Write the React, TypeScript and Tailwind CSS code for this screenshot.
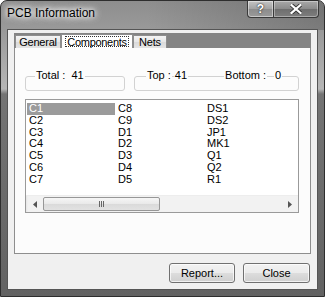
import React from "react";

const columns = [
  ["C1", "C2", "C3", "C4", "C5", "C6", "C7"],
  ["C8", "C9", "D1", "D2", "D3", "D4", "D5"],
  ["DS1", "DS2", "JP1", "MK1", "Q1", "Q2", "R1"],
];

function TitleButtons() {
  return (
    <div className="flex mt-0">
      <div className="w-[26px] h-[17px] flex items-center justify-center rounded-bl-[4px] border border-t-0 border-r-0 border-[#3a3a3a] bg-[linear-gradient(to_bottom,#c4c4c4,#a2a2a2_50%,#8c8c8c_51%,#9a9a9a)] shadow-[inset_0_0_0_1px_rgba(255,255,255,0.45)]">
        <span className="text-[12px] leading-none font-bold text-white [text-shadow:0_0_2px_#333,0_0_1px_#222]">?</span>
      </div>
      <div className="w-[46px] h-[17px] flex items-center justify-center rounded-br-[4px] border border-t-0 border-[#3a3a3a] bg-[linear-gradient(to_bottom,#a8a8a8,#8a8a8a_50%,#6e6e6e_51%,#7e7e7e)] shadow-[inset_0_0_0_1px_rgba(255,255,255,0.35)]">
        <svg width="12" height="10" viewBox="0 0 12 10">
          <path d="M1.5 1 L10.5 9 M10.5 1 L1.5 9" stroke="#333" strokeWidth="4" strokeLinecap="square" />
          <path d="M1.5 1 L10.5 9 M10.5 1 L1.5 9" stroke="#fff" strokeWidth="2.2" strokeLinecap="square" />
        </svg>
      </div>
    </div>
  );
}

function Tab({ label, active, w }: { label: string; active?: boolean; w: string }) {
  if (active) {
    return (
      <div className={`${w} h-[14px] flex items-center justify-center bg-white border border-b-0 border-[#8e8e8e] tracking-[-0.3px]`}>
        <span className="px-[1px] leading-[10px] h-[11px] border border-dotted border-[#333]">{label}</span>
      </div>
    );
  }
  return (
    <div className={`${w} h-[13px] flex items-center justify-center leading-[11px] tracking-[-0.2px] bg-[linear-gradient(to_bottom,#f4f4f4,#e6e6e6_50%,#dadada_51%,#e4e4e4)] border border-b-0 border-[#8e8e8e]`}>
      {label}
    </div>
  );
}

function ScrollBar() {
  return (
    <div className="h-[17px] flex bg-[linear-gradient(to_right,#e6e6e6,#f2f2f2_2px,#f2f2f2)] border-t border-[#ededed]">
      <div className="w-[17px] flex items-center justify-center">
        <svg width="4" height="7" viewBox="0 0 4 7">
          <path d="M4 0 L0 3.5 L4 7 Z" fill="#555" />
        </svg>
      </div>
      <div className="w-[117px] my-[1px] flex items-center justify-center rounded-[2px] border border-[#979797] bg-[linear-gradient(to_bottom,#f6f6f6,#e9e9e9_50%,#dadada_51%,#e2e2e2)]">
        <div className="flex gap-[1px]">
          <div className="w-[1px] h-[6px] bg-[#666]" />
          <div className="w-[1px] h-[6px] bg-[#666]" />
          <div className="w-[1px] h-[6px] bg-[#666]" />
        </div>
      </div>
      <div className="flex-1" />
      <div className="w-[17px] flex items-center justify-center">
        <svg width="4" height="7" viewBox="0 0 4 7">
          <path d="M0 0 L4 3.5 L0 7 Z" fill="#555" />
        </svg>
      </div>
    </div>
  );
}

function Button({ label, w }: { label: string; w: string }) {
  return (
    <div className={`${w} h-[20px] flex items-center justify-center text-[11px] rounded-[3px] border border-[#707070] bg-[linear-gradient(to_bottom,#f2f2f2,#ebebeb_50%,#dddddd_51%,#cfcfcf)] shadow-[inset_0_0_0_1px_rgba(255,255,255,0.7)]`}>
      {label}
    </div>
  );
}

export default function App() {
  return (
    <div className="w-[325px] h-[297px] flex flex-col rounded-t-[7px] border border-[#2e2e2e] bg-[linear-gradient(to_bottom,#8e8e8e_0px,#9a9a9a_30px,#b6b6b6_88px,#747474_93px,#626262_297px)] font-['Liberation_Sans',Arial,sans-serif] text-black overflow-hidden">
      {/* title bar */}
      <div className="h-[29px] flex items-start justify-between pl-[6px] pr-[5px] bg-[linear-gradient(to_right,rgba(0,0,0,0)_45%,rgba(0,0,0,0.2)_100%)]">
        <div className="mt-[5px] text-[12px] leading-[14px] [text-shadow:0_0_8px_#fff,0_0_8px_#fff,0_0_4px_#fff]">PCB Information</div>
        <TitleButtons />
      </div>

      {/* client area */}
      <div className="flex-1 mx-[7px] mb-[7px] bg-[#f0f0f0] outline outline-[#555] flex flex-col text-[11px]">
        <div className="pt-[3px] px-[6px] flex flex-col">
          <div className="h-[15px] bg-[#848484] flex items-end pl-[1px]">
            <Tab label="General" w="w-[46px]" />
            <Tab label="Components" w="w-[72px]" active />
            <Tab label="Nets" w="w-[34px]" />
          </div>
          <div className="h-[206px] border border-t-0 border-[#8e8e8e] bg-[#fcfcfc] flex flex-col pl-[10px]">
            {/* counts */}
            <div className="mt-[28px] flex gap-[9px]">
              <div className="relative w-[100px] h-[15px] rounded-[3px] border border-[#d2d2d2]">
                <div className="absolute left-[9px] top-[-8px] leading-[13px] px-[1px] bg-[#fcfcfc]">Total :&nbsp; 41</div>
              </div>
              <div className="relative w-[165px] h-[15px] rounded-[3px] border border-[#d2d2d2]">
                <div className="absolute left-[11px] top-[-8px] leading-[13px] flex">
                  <span className="px-[1px] bg-[#fcfcfc]">Top :</span>
                  <span className="ml-[2px] px-[1px] bg-[#fcfcfc]">41</span>
                  <span className="ml-[36px] px-[1px] bg-[#fcfcfc]">Bottom :</span>
                  <span className="ml-[7px] px-[1px] bg-[#fcfcfc]">0</span>
                </div>
              </div>
            </div>

            {/* list box */}
            <div className="mt-[8px] w-[274px] h-[114px] border border-[#9a9a9a] bg-white flex flex-col">
              <div className="flex-1 flex pt-[3px] pl-[1px]">
                {columns.map((col, ci) => (
                  <div key={ci} className="w-[89px] flex flex-col">
                    {col.map((item, ii) => (
                      <div
                        key={item}
                        className={`h-[11.8px] leading-[11.8px] pl-[2px] w-[88px] ${
                          ci === 0 && ii === 0 ? "bg-[#9b9b9b] text-white" : ""
                        }`}
                      >
                        {item}
                      </div>
                    ))}
                  </div>
                ))}
              </div>
              <ScrollBar />
            </div>
          </div>
        </div>

        {/* buttons */}
        <div className="mt-[9px] flex justify-end gap-[8px] pr-[7px]">
          <Button label="Report..." w="w-[66px]" />
          <Button label="Close" w="w-[67px]" />
        </div>
      </div>
    </div>
  );
}
